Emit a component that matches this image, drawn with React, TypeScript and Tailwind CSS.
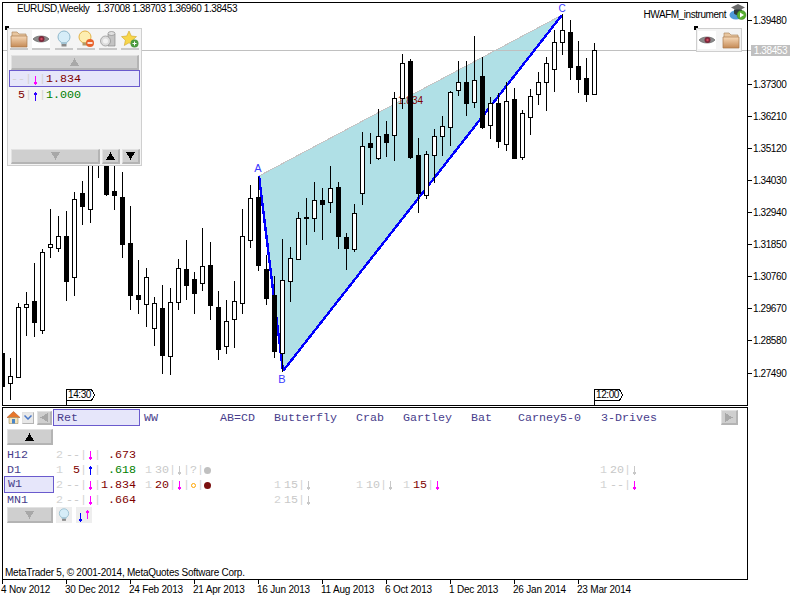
const SANS = "[font-family:'Liberation_Sans',Arial,sans-serif]";
const MONO = "[font-family:'Liberation_Mono','Courier_New',monospace]";

// x, wick top, wick bottom, body top, body bottom, black?
const CANDLES: [number, number, number, number, number, number][] = [
  [2, 353, 386, 353, 386, 1], [10, 358, 400, 376, 383, 0], [18, 303, 377, 307, 377, 0],
  [26, 292, 336, 304, 307, 0], [34, 263, 337, 301, 322, 1], [42, 249, 334, 252, 330, 0],
  [50, 209, 258, 244, 247, 0], [58, 216, 252, 236, 248, 0], [66, 211, 301, 236, 281, 1],
  [74, 192, 296, 199, 277, 0], [82, 181, 225, 193, 206, 1], [90, 140, 223, 150, 209, 0],
  [98, 140, 178, 150, 152, 1], [106, 140, 196, 150, 194, 1], [114, 150, 210, 191, 195, 1],
  [122, 172, 258, 197, 244, 1], [130, 206, 310, 243, 295, 1], [138, 260, 314, 295, 299, 1],
  [146, 268, 327, 277, 304, 0], [154, 297, 346, 303, 328, 0], [162, 285, 374, 308, 355, 1],
  [170, 288, 375, 302, 356, 0], [178, 259, 310, 268, 302, 0], [186, 240, 300, 269, 285, 1],
  [194, 272, 314, 279, 293, 1], [202, 228, 291, 266, 283, 0], [210, 242, 320, 265, 305, 1],
  [218, 291, 360, 307, 349, 1], [226, 300, 354, 321, 346, 0], [234, 281, 348, 301, 319, 0],
  [242, 209, 314, 236, 303, 0], [250, 185, 248, 198, 240, 0], [258, 177, 271, 197, 265, 1],
  [266, 255, 305, 269, 298, 1], [274, 276, 358, 295, 351, 1], [282, 239, 372, 280, 353, 0],
  [290, 247, 302, 258, 281, 0], [298, 212, 259, 218, 259, 0], [306, 198, 245, 217, 218, 1],
  [314, 182, 232, 200, 218, 0], [322, 188, 240, 200, 204, 1], [330, 166, 213, 188, 202, 0],
  [338, 182, 249, 187, 236, 1], [346, 233, 270, 237, 248, 1], [354, 204, 252, 213, 249, 0],
  [362, 132, 205, 146, 193, 0], [370, 133, 164, 143, 147, 1], [378, 109, 160, 136, 158, 0],
  [386, 121, 157, 134, 142, 1], [394, 92, 161, 98, 135, 0], [402, 54, 109, 63, 98, 0],
  [410, 59, 159, 61, 157, 1], [418, 138, 213, 155, 193, 1], [426, 151, 199, 154, 195, 0],
  [434, 129, 183, 136, 155, 0], [442, 116, 156, 126, 136, 0], [450, 91, 146, 92, 127, 0],
  [458, 61, 96, 82, 90, 0], [466, 61, 116, 82, 103, 1], [474, 36, 108, 80, 102, 0],
  [482, 57, 129, 76, 127, 1], [490, 97, 139, 103, 125, 0], [498, 93, 148, 103, 141, 1],
  [506, 82, 151, 101, 144, 0], [514, 88, 159, 99, 158, 1], [522, 110, 160, 113, 157, 0],
  [530, 89, 135, 96, 117, 0], [538, 72, 105, 82, 94, 0], [546, 57, 111, 63, 82, 0],
  [554, 30, 92, 42, 69, 0], [562, 14, 55, 30, 42, 0], [570, 20, 80, 32, 67, 1],
  [578, 41, 93, 66, 79, 1], [586, 58, 102, 78, 94, 1], [594, 43, 95, 50, 94, 0],
];

const PRICES = ["1.39480", "", "1.37300", "1.36210", "1.35120", "1.34030", "1.32940", "1.31850", "1.30760", "1.29670", "1.28580", "1.27490"];
const DATES = ["4 Nov 2012", "30 Dec 2012", "24 Feb 2013", "21 Apr 2013", "16 Jun 2013", "11 Aug 2013", "6 Oct 2013", "1 Dec 2013", "26 Jan 2014", "23 Mar 2014"];

const TABS: [string, number][] = [
  ["WW", 76], ["AB=CD", 54], ["Butterfly", 82], ["Crab", 47], ["Gartley", 68], ["Bat", 47], ["Carney5-0", 83], ["3-Drives", 70],
];

function Btn({ className = "", children }: { className?: string; children?: React.ReactNode }) {
  return (
    <div className={`flex items-center justify-center border-t border-l border-t-[#e2e2e2] border-l-[#e2e2e2] border-r-2 border-b-2 border-r-[#b4b4b4] border-b-[#b4b4b4] bg-[#cfcfcf] ${className}`}>
      {children}
    </div>
  );
}

function Tri({ down, color }: { down?: boolean; color: string }) {
  return (
    <svg width="9" height="8" viewBox="0 0 9 8" shapeRendering="crispEdges">
      <polygon points={down ? "0,0 9,0 4.5,8" : "4.5,0 9,8 0,8"} fill={color} />
    </svg>
  );
}

function Arrow({ up, color, className = "" }: { up?: boolean; color: string; className?: string }) {
  return (
    <svg width="7" height="9" viewBox="0 0 7 9" shapeRendering="crispEdges" className={`shrink-0 ${className}`}>
      <rect x="3" y="0" width="1" height="9" fill={color} />
      {up ? <rect x="2" y="1" width="3" height="2" fill={color} /> : <rect x="2" y="6" width="3" height="2" fill={color} />}
    </svg>
  );
}

function Folder() {
  return (
    <svg width="18" height="18" viewBox="0 0 18 18">
      <defs>
        <linearGradient id="fold" x1="0" y1="0" x2="0" y2="1">
          <stop offset="0" stopColor="#f6d9b8" />
          <stop offset="1" stopColor="#c58a55" />
        </linearGradient>
      </defs>
      <path d="M2 2h5l2 2h7v4H2z" fill="#e8c6a0" stroke="#b08a62" strokeWidth="0.7" />
      <path d="M1 6h16v11H1z" fill="url(#fold)" stroke="#a9794c" strokeWidth="0.7" />
    </svg>
  );
}

function Eye() {
  return (
    <svg width="18" height="18" viewBox="0 0 18 18" className="bg-white">
      <path d="M1 9c3-4 13-4 16 0-3 4-13 4-16 0z" fill="#8a8a8a" stroke="#555" strokeWidth="0.6" />
      <circle cx="9.5" cy="9" r="3" fill="#7c2a3c" />
      <circle cx="9.5" cy="9" r="1.2" fill="#d8495f" />
    </svg>
  );
}

function Bulb({ size = 18 }: { size?: number }) {
  return (
    <svg width={size} height={size} viewBox="0 0 18 18">
      <circle cx="9" cy="7" r="6" fill="#d6edf8" stroke="#8fb8cc" />
      <path d="M6 12h6v2H6z" fill="#a5c6d6" />
      <path d="M6.5 14h5v2.500h-5z" fill="#8a8a8a" />
    </svg>
  );
}

function BulbOff() {
  return (
    <svg width="18" height="18" viewBox="0 0 18 18">
      <circle cx="8" cy="7" r="6" fill="#fdeeb0" stroke="#e3b347" />
      <path d="M5.500 12.500h5v3h-5z" fill="#b39b66" />
      <circle cx="13" cy="13" r="4" fill="#e8622a" />
      <rect x="10.500" y="12.200" width="5" height="1.600" fill="#fff" />
    </svg>
  );
}

function Cans() {
  return (
    <svg width="18" height="18" viewBox="0 0 18 18">
      <path d="M9 4h7v12H9z" fill="#c4c4c4" stroke="#8c8c8c" strokeWidth="0.7" />
      <ellipse cx="12.500" cy="3.500" rx="3.500" ry="2" fill="#e0e0e0" stroke="#8c8c8c" strokeWidth="0.7" />
      <circle cx="6.500" cy="11" r="5" fill="#dcdcdc" stroke="#8c8c8c" strokeWidth="0.7" />
      <circle cx="6.500" cy="11" r="2.500" fill="#f2f2f2" />
    </svg>
  );
}

function StarPlus() {
  return (
    <svg width="18" height="18" viewBox="0 0 18 18">
      <polygon points="8,1 10.300,6 15.500,6.600 11.600,10.200 12.700,15.500 8,12.800 3.300,15.500 4.400,10.200 0.500,6.600 5.700,6" fill="#f7d64a" stroke="#cfa52a" strokeWidth="0.6" />
      <circle cx="13.500" cy="13.500" r="4" fill="#4c9a3f" />
      <path d="M11.500 13h4v1h-4zM13 11.500h1v4h-1z" fill="#fff" />
    </svg>
  );
}

function Home() {
  return (
    <svg width="13" height="13" viewBox="0 0 13 13">
      <polygon points="6.500,0.500 13,6.500 0,6.500" fill="#e8762a" stroke="#a8501a" strokeWidth="0.5" />
      <path d="M2 6.500h9V12.500H2z" fill="#f4e2b8" stroke="#8a7a50" strokeWidth="0.5" />
      <path d="M5 8h3v4.500H5z" fill="#4a86c8" />
    </svg>
  );
}

function HatIcon() {
  return (
    <svg width="18" height="18" viewBox="0 0 18 18">
      <ellipse cx="7" cy="12" rx="6.500" ry="4.500" fill="#4f9ad8" />
      <polygon points="9,1 16,4.500 9,8 2,4.500" fill="#6b6b6b" />
      <path d="M5 6.500h8v4c-2 2-6 2-8 0z" fill="#2e3a3a" />
      <circle cx="12.500" cy="12" r="4.500" fill="#58b030" stroke="#2f7a1c" strokeWidth="0.5" />
      <polygon points="11,9.500 15,12 11,14.500" fill="#fff" />
    </svg>
  );
}

function Tool({ children }: { children: React.ReactNode }) {
  return <div className="h-[20px] w-[18px] border-b-2 border-[#c8c8c8]">{children}</div>;
}

function Handle({ className }: { className: string }) {
  return <div className={`absolute h-[4px] w-[4px] bg-black ${className}`} />;
}

function TimeMarker({ left, label }: { left: number; label: string }) {
  return (
    <div className={`absolute bottom-0 h-[16px] w-[30px] ${SANS}`} style={{ left }}>
      <svg width="30" height="16" viewBox="0 0 30 16" shapeRendering="crispEdges" className="absolute left-0 top-0">
        <path d="M0.500 16V0.500H25.500L28.500 6L25.500 11.500H0.500" fill="#fff" stroke="#000" />
      </svg>
      <span className="absolute left-[2px] top-0 text-[10px] leading-[12px] tracking-[-0.4px] text-black">{label}</span>
    </div>
  );
}

function Chart() {
  return (
    <svg width="744" height="402" viewBox="3 3 744 402" className="block">
      <g shapeRendering="crispEdges">
        <polygon points="259,176 283,371 562,15" fill="#b0e0e6" />
        <line x1="259" y1="176" x2="562" y2="15" stroke="#c4c4c4" />
        <line x1="3" y1="50.500" x2="747" y2="50.500" stroke="#c0c0c0" />
        <line x1="259" y1="176" x2="283" y2="371" stroke="#0000ff" strokeWidth="2.4" />
        <line x1="283" y1="371" x2="562" y2="15" stroke="#0000ff" strokeWidth="2.4" />
      </g>
      <text x="398" y="104" fill="#800000" fontSize="10" fontFamily="Liberation Sans">1.834</text>
      <g shapeRendering="crispEdges">
        {CANDLES.map(([x, hi, lo, top, bot, black]) => (
          <g key={x}>
            <rect x={x} y={hi} width="1" height={lo - hi} fill="#000" />
            <rect x={x - 1.5} y={top + 0.5} width="4" height={bot - top} fill={black ? "#000" : "#fff"} stroke="#000" />
          </g>
        ))}
      </g>
      <g fill="#3a3aff" fontFamily="Liberation Sans" textAnchor="middle">
        <text x="258" y="172" fontSize="11">A</text>
        <text x="282" y="383" fontSize="11">B</text>
        <text x="562" y="12" fontSize="10">C</text>
      </g>
    </svg>
  );
}

function SignalPanel() {
  return (
    <div className="absolute left-[4px] top-[25px] flex h-[138px] w-[135px] flex-col border border-[#cfcfcf] bg-[#f4f4f4] pb-[1px]">
      <div className="mt-[1px] flex h-[21px] gap-1 pl-[2px]">
        <Tool><Folder /></Tool>
        <Tool><Eye /></Tool>
        <div className="ml-px"><Tool><Bulb /></Tool></div>
        <Tool><BulbOff /></Tool>
        <Tool><Cans /></Tool>
        <Tool><StarPlus /></Tool>
      </div>
      <Btn className="ml-[3px] mt-[4px] h-[15px] w-[128px]"><Tri color="#a8a8a8" /></Btn>
      <div className={`ml-[1px] flex h-[17px] w-[131px] items-center border border-[#6a5acd] bg-[#e6e6fa] pt-[2px] text-[11.67px] ${MONO}`}>
        <span className="w-[15px] text-right text-[#d3d3d3]">--</span>
        <span className="w-[7px] text-center text-[#d3d3d3]">|</span>
        <Arrow color="#ff00ff" className="translate-y-px" />
        <span className="w-[7px] text-center text-[#d3d3d3]">|</span>
        <span className="text-[#800000]">1.834</span>
      </div>
      <div className={`ml-[2px] flex h-[15px] items-center pt-[2px] text-[11.67px] ${MONO}`}>
        <span className="w-[15px] text-right text-[#800000]">5</span>
        <span className="w-[7px] text-center text-[#d3d3d3]">|</span>
        <Arrow up color="#3000ff" className="translate-y-px" />
        <span className="w-[7px] text-center text-[#d3d3d3]">|</span>
        <span className="text-[#008000]">1.000</span>
      </div>
      <div className="mt-auto ml-[3px] flex gap-[2px]">
        <Btn className="h-[15px] w-[89px]"><Tri down color="#a8a8a8" /></Btn>
        <Btn className="h-[15px] w-[18px]"><Tri color="#000" /></Btn>
        <Btn className="h-[15px] w-[18px]"><Tri down color="#000" /></Btn>
      </div>
    </div>
  );
}

function Sep() {
  return <span className="w-[7px] shrink-0 text-center text-[#d3d3d3]">|</span>;
}

type CellProps = {
  n: string;
  count: string;
  countColor?: string;
  arrow: string;
  up?: boolean;
  value?: string;
  valueColor?: string;
  children?: React.ReactNode;
  width: number;
};

function Cell({ n, count, countColor = "text-[#c8c8c8]", arrow, up, value, valueColor = "text-[#800000]", children, width }: CellProps) {
  return (
    <div className="flex shrink-0 items-center" style={{ width }}>
      <span className="w-[7px] shrink-0 text-[#d3d3d3]">{n}</span>
      <span className={`w-[17px] shrink-0 text-right ${countColor}`}>{count}</span>
      <Sep />
      <Arrow up={up} color={arrow} />
      {value && <Sep />}
      {value && <span className={`w-[35px] shrink-0 text-right ${valueColor}`}>{value}</span>}
      {children}
    </div>
  );
}

function Row({ name, selected, children }: { name: string; selected?: boolean; children: React.ReactNode }) {
  return (
    <div className="flex h-[15px] items-center pt-[2px]">
      <div className={`ml-[1px] mr-[2px] flex w-[50px] shrink-0 items-center pl-[3px] text-[#483d8b] ${selected ? "-mt-[3px] h-[17px] border border-[#6a5acd] bg-[#e6e6fa] pt-[1px]" : ""}`}>
        {name}
      </div>
      {children}
    </div>
  );
}

function ScannerPanel() {
  return (
    <div className={`mt-px flex h-[173px] w-[746px] flex-col border border-black text-[11.67px] leading-none ${MONO}`}>
      <div className="mt-px flex h-[17px] items-center">
        <div className="ml-[4px] flex h-[13px] w-[13px] items-center justify-center"><Home /></div>
        <Btn className="ml-[2px] h-[12px] w-[12px] !border-r !border-b bg-[#e8e8e8]">
          <svg width="8" height="5" viewBox="0 0 8 5"><path d="M0.500 0.500L4 4L7.500 0.500" stroke="#4a78c8" strokeWidth="1.500" fill="none" /></svg>
        </Btn>
        <Btn className="ml-[3px] h-[14px] w-[15px]">
          <svg width="8" height="9" viewBox="0 0 8 9" shapeRendering="crispEdges"><polygon points="8,0 8,9 0,4.500" fill="#a8a8a8" /></svg>
        </Btn>
        <div className="ml-px flex h-[17px] w-[87px] items-center border border-[#6a5acd] bg-[#e6e6fa] pl-[3px] pt-[2px] text-[#483d8b]">Ret</div>
        <div className="ml-[4px] flex pt-[2px] text-[#483d8b]">
          {TABS.map(([t, w]) => (
            <span key={t} className="shrink-0" style={{ width: w }}>{t}</span>
          ))}
        </div>
        <Btn className="ml-[50px] h-[15px] w-[17px]">
          <svg width="8" height="9" viewBox="0 0 8 9" shapeRendering="crispEdges"><polygon points="0,0 0,9 8,4.500" fill="#a8a8a8" /></svg>
        </Btn>
      </div>
      <Btn className="ml-[4px] mt-[3px] h-[16px] w-[46px]"><Tri color="#000" /></Btn>
      <div className="mt-[2px]">
        <Row name="H12">
          <Cell n="2" count="--" arrow="#ff00ff" value=".673" width={89} />
        </Row>
        <Row name="D1">
          <Cell n="1" count="5" countColor="text-[#800000]" arrow="#0000ff" up value=".618" valueColor="text-[#008000]" width={89} />
          <Cell n="1" count="30" arrow="#c8c8c8" width={455}>
            <Sep />
            <span className="w-[7px] shrink-0 text-center text-[#c8c8c8]">?</span>
            <Sep />
            <span className="h-[7px] w-[7px] shrink-0 rounded-full bg-[#c0c0c0]" />
          </Cell>
          <Cell n="1" count="20" arrow="#c8c8c8" width={40} />
        </Row>
        <Row name="W1" selected>
          <Cell n="2" count="--" arrow="#ff00ff" value="1.834" width={89} />
          <Cell n="1" count="20" countColor="text-[#800000]" arrow="#ff00ff" width={129}>
            <Sep />
            <span className="ml-[1px] h-[5px] w-[5px] shrink-0 rounded-full border border-[#ffa500]" />
            <span className="ml-[1px] w-[7px] shrink-0 text-center text-[#d3d3d3]">|</span>
            <span className="h-[7px] w-[7px] shrink-0 rounded-full bg-[#7a1010]" />
          </Cell>
          <Cell n="1" count="15" arrow="#c8c8c8" width={82} />
          <Cell n="1" count="10" arrow="#c8c8c8" width={47} />
          <Cell n="1" count="15" countColor="text-[#800000]" arrow="#ff00ff" width={197} />
          <Cell n="1" count="--" arrow="#ff00ff" width={40} />
        </Row>
        <Row name="MN1">
          <Cell n="2" count="--" arrow="#ff00ff" value=".664" width={89} />
          <div className="w-[129px] shrink-0" />
          <Cell n="2" count="15" arrow="#c8c8c8" width={82} />
        </Row>
      </div>
      <div className="flex items-start">
        <Btn className="ml-[4px] h-[16px] w-[46px]"><Tri down color="#a8a8a8" /></Btn>
        <div className="ml-[3px] flex h-[16px] w-[16px] items-center justify-center bg-[#eeeeee]"><Bulb size={14} /></div>
        <div className="ml-[4px] flex h-[16px] w-[16px] items-center justify-center bg-[#eeeeee]">
          <Arrow color="#0000ff" className="translate-y-[2px]" />
          <Arrow up color="#ff00ff" className="-translate-y-px" />
        </div>
      </div>
      <div className={`mt-auto pl-[2px] text-[10px] leading-[12px] tracking-[-0.25px] text-black ${SANS}`}>
        MetaTrader 5, © 2001-2014, MetaQuotes Software Corp.
      </div>
    </div>
  );
}

export default function App() {
  return (
    <div className={`flex h-[600px] w-[800px] flex-col overflow-hidden bg-white pl-[2px] pt-[2px] ${SANS}`}>
      <div className="flex h-[404px]">
        <div className="relative h-[404px] w-[746px] shrink-0 overflow-hidden border border-black">
          <Chart />
          <div className="absolute left-[14px] top-[1px] whitespace-pre text-[10px] leading-[10px] tracking-[-0.4px] text-black">
            EURUSD,Weekly   1.37008 1.38703 1.36960 1.38453
          </div>
          <div className="absolute right-0 top-0 flex items-start gap-[3px]">
            <span className="mt-[7px] text-[10px] leading-[10px] tracking-[-0.45px] text-black">HWAFM_instrument</span>
            <HatIcon />
          </div>
          <Handle className="left-[2px] top-[23px]" />
          <SignalPanel />
          <Handle className="left-[691px] top-[23px]" />
          <div className="absolute left-[693px] top-[25px] flex h-[24px] w-[46px] items-center gap-[6px] border border-[#cfcfcf] bg-[#f4f4f4] pl-[1px]">
            <Eye />
            <Folder />
          </div>
          <TimeMarker left={63} label="14:30" />
          <TimeMarker left={591} label="12:00" />
        </div>
        <div className="relative flex-1 pt-[2px]">
          {PRICES.map((p, i) => (
            <div key={i} className="flex h-[32.1px] items-center">
              {p && <div className="h-px w-[4px] bg-black" />}
              <span className="ml-px text-[10px] tracking-[-0.4px] text-black">{p}</span>
            </div>
          ))}
          <div className="absolute left-0 top-[48px] h-px w-[3px] bg-[#c0c0c0]" />
          <div className="absolute left-[3px] top-[43px] flex h-[11px] w-[39px] items-center justify-center bg-[#c0c0c0] text-[10px] tracking-[-0.4px] text-white">
            1.38453
          </div>
        </div>
      </div>
      <ScannerPanel />
      <div className="flex">
        {DATES.map((d) => (
          <div key={d} className="w-16 shrink-0">
            <div className="h-[4px] w-px bg-black" />
            <div className="-ml-px whitespace-nowrap text-[10px] leading-[12px] tracking-[-0.2px] text-black">{d}</div>
          </div>
        ))}
      </div>
    </div>
  );
}
